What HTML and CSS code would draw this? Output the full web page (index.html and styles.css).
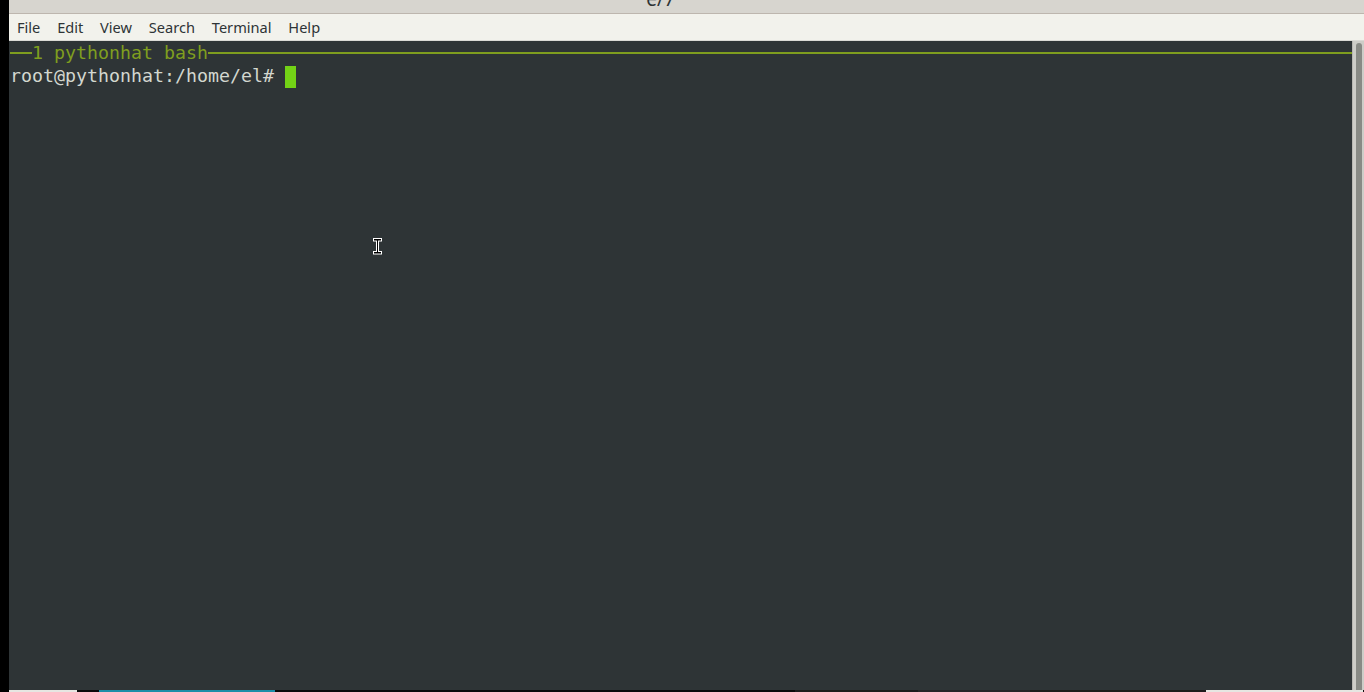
FILE: index.html
```html
<!DOCTYPE html>
<html lang="en">

<head>
    <meta charset="UTF-8" />
    <meta name="viewport" content="width=device-width, initial-scale=1.0" />
    <title>Terminal</title>
    <link rel="stylesheet" href="styles.css">
</head>

<body>
    <div class="edge"></div>

    <div class="window">
        <div class="titlebar">
            <span class="title">e/7</span>
        </div>

        <div class="menubar">
            <span>File</span>
            <span>Edit</span>
            <span>View</span>
            <span>Search</span>
            <span>Terminal</span>
            <span>Help</span>
        </div>

        <div class="term-area">
            <div class="terminal">
                <div class="tab-title">
                    <span class="rule short"></span>
                    <span class="tab-name">1 pythonhat bash</span>
                    <span class="rule long"></span>
                </div>
                <div class="line">root@pythonhat:/home/el# <span class="cursor"></span></div>

                <svg class="ibeam" width="12" height="19" viewBox="0 0 12 19">
                    <path d="M1 1h9v3.5h-3v9.5h3v3.5h-9v-3.5h3v-9.5h-3z" fill="#fff" />
                    <path d="M2 2h7v1.5h-3v11.5h3v1.5h-7v-1.5h3v-11.5h-3z" fill="#000" />
                </svg>
            </div>

            <div class="scrollbar">
                <div class="thumb"></div>
            </div>
        </div>

        <div class="taskbar">
            <span class="seg light" style="width: 68px"></span>
            <span class="seg black" style="width: 22px"></span>
            <span class="seg teal" style="width: 176px"></span>
            <span class="seg black" style="width: 520px"></span>
            <span class="seg dark" style="width: 123px"></span>
            <span class="seg darker" style="width: 112px"></span>
            <span class="seg dark" style="width: 176px"></span>
            <span class="seg light" style="width: 157px"></span>
        </div>
    </div>
</body>

</html>
```

FILE: styles.css
```css
body {
    margin: 0;
    width: 1364px;
    height: 692px;
    overflow: hidden;
    display: flex;
    background-color: #000;
    font-family: 'Noto Sans', 'Open Sans', sans-serif;
}

.edge {
    width: 9px;
    background-color: #000;
    flex-shrink: 0;
}

.window {
    flex: 1;
    display: flex;
    flex-direction: column;
    min-width: 0;
}

/* only the lower edge of the window title is on screen */
.titlebar {
    height: 13px;
    background-color: #d7d5cf;
    border-bottom: 1px solid #bdb6ae;
    overflow: hidden;
    display: flex;
    justify-content: center;
}

.title {
    margin-top: -12px;
    margin-left: -52px;
    font-size: 19px;
    line-height: 22px;
    color: #2e3436;
}

.menubar {
    height: 26px;
    background-color: #f2f2ec;
    border-bottom: 1px solid #dadad5;
    display: flex;
    align-items: center;
    padding-left: 8px;
}

.menubar span {
    font-size: 14.6px;
    color: #2e3436;
    margin-right: 16.8px;
    line-height: 26px;
}

.term-area {
    flex: 1;
    display: flex;
    min-height: 0;
}

.terminal {
    flex: 1;
    position: relative;
    background-color: #2e3436;
    padding-left: 1px;
    font-family: 'DejaVu Sans Mono', monospace;
    font-size: 18.27px;
    line-height: 23px;
    color: #d3d7cf;
}

.tab-title {
    display: flex;
    align-items: center;
    height: 23px;
    color: #7f9e1f;
}

.rule {
    height: 2px;
    background-color: #7f9e1f;
    margin-top: 1px;
}

.rule.short {
    width: 22px;
}

.rule.long {
    flex: 1;
}

.tab-name {
    white-space: pre;
}

.line {
    white-space: pre;
    height: 23px;
    display: flex;
    align-items: center;
}

.cursor {
    display: inline-block;
    width: 11px;
    height: 22px;
    background-color: #73d216;
    margin-top: 2px;
}

.ibeam {
    position: absolute;
    left: 363px;
    top: 196px;
}

.scrollbar {
    width: 11px;
    background-color: #cdcdc8;
    border-left: 1px solid #b8b8b3;
    display: flex;
    justify-content: center;
    padding-top: 2px;
}

.thumb {
    width: 6px;
    background-color: #888a85;
    border-radius: 3px 3px 0 0;
}

.taskbar {
    height: 2px;
    display: flex;
    background-color: #111;
}

.seg {
    height: 2px;
}

.seg.light {
    background-color: #e6e6e2;
}

.seg.black {
    background-color: #0a0a0a;
}

.seg.teal {
    background-color: #1b8ea8;
}

.seg.dark {
    background-color: #1c1c1c;
}

.seg.darker {
    background-color: #262626;
}
```
